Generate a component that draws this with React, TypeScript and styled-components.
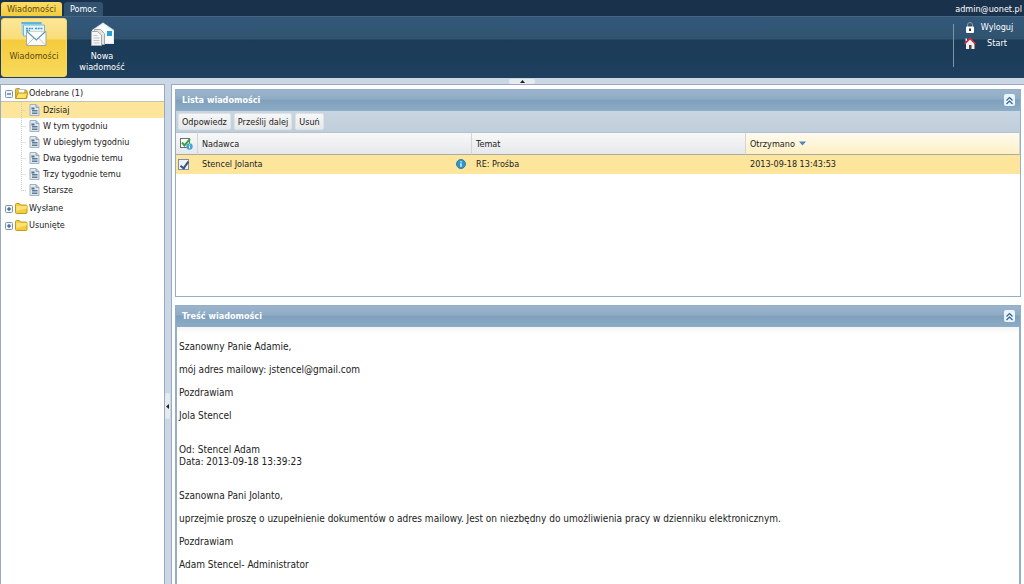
import React, { useState } from "react";
import styled, { createGlobalStyle, css } from "styled-components";

const GlobalStyle = createGlobalStyle`
  * { box-sizing: border-box; }
  body {
    margin: 0;
    background: #cbd7e5;
    color: #222;
    font: 9px/12px "DejaVu Sans Condensed", "DejaVu Sans", sans-serif;
  }
  button, input { font: inherit; color: inherit; margin: 0; padding: 0; }
  ul { list-style: none; margin: 0; padding: 0; }
`;

const Page = styled.div`
  min-height: 100vh;
  display: flex;
  flex-direction: column;
`;

const TopBar = styled.header`
  display: flex;
  justify-content: space-between;
  align-items: flex-end;
  height: 16px;
  padding: 0 2px 0 1px;
  background: #19314b;
  color: #fff;
`;

const Tabs = styled.nav`
  display: flex;
  gap: 2px;
`;

const Tab = styled.button<{ $active?: boolean }>`
  height: 14px;
  padding: 0 6px;
  border: 0;
  border-radius: 3px 3px 0 0;
  color: ${(p) => (p.$active ? "#5b4a10" : "#fff")};
  background: ${(p) =>
    p.$active ? "linear-gradient(#fbdc66, #f3cc3c)" : "#31536f"};
`;

const User = styled.span`
  line-height: 14px;
`;

const Ribbon = styled.div`
  display: flex;
  justify-content: space-between;
  height: 62px;
  padding: 1px 9px 1px 1px;
  border-top: 1px solid #46657f;
  background: linear-gradient(#33587a 0, #30536f 22px, #1b3b57 23px, #1e405e 100%);
  color: #fff;
`;

const Tools = styled.div`
  display: flex;
  gap: 2px;
`;

const Tool = styled.button<{ $active?: boolean }>`
  display: flex;
  flex-direction: column;
  align-items: center;
  gap: 4px;
  width: 66px;
  padding: 2px 0 0;
  border: 1px solid transparent;
  border-radius: 3px;
  background: none;
  line-height: 11px;
  ${(p) =>
    p.$active &&
    css`
      color: #5b4a10;
      border-color: #f6d65a;
      background: linear-gradient(#fce69a 0, #fadc78 20px, #f4cb3c 21px, #f8da5c 100%);
    `}
`;

const Session = styled.div`
  display: flex;
  flex-direction: column;
  gap: 2px;
  height: 43px;
  margin-top: 6px;
  padding-left: 9px;
  border-left: 1px solid #7d95a8;
`;

const SessionLink = styled.a`
  display: grid;
  grid-template-columns: 14px 36px;
  align-items: center;
  gap: 2px;
  height: 14px;
  margin-top: -4px;
  margin-bottom: 4px;
  color: #fff;
  text-align: center;
  text-decoration: none;
`;

const TopSplitter = styled.div`
  display: flex;
  justify-content: center;
  align-items: flex-end;
  height: 6px;
  padding-left: 20px;
`;

const Handle = styled.button<{ $vertical?: boolean }>`
  display: flex;
  align-items: center;
  justify-content: center;
  width: ${(p) => (p.$vertical ? "5px" : "26px")};
  height: ${(p) => (p.$vertical ? "26px" : "5px")};
  border: 0;
  border-radius: 2px;
  background: #e6ebf0;
`;

const Main = styled.main`
  flex: 1;
  display: flex;
`;

const Sidebar = styled.nav`
  flex: none;
  width: 165px;
  border: 1px solid #98abc0;
  border-bottom: 0;
  background: #fff;
`;

const SideSplitter = styled.div`
  display: flex;
  flex: none;
  align-items: center;
  width: 6px;
  padding-top: 132px;
`;

const Content = styled.div`
  flex: 1;
  min-width: 0;
  display: flex;
  flex-direction: column;
  gap: 8px;
  padding: 4px 3px 0;
  border-top: 1px solid #98abc0;
  border-left: 1px solid #98abc0;
  background: #fff;
`;

const Branch = styled.li`
  & + & { margin-top: 1px; }
`;

const Node = styled.div`
  display: flex;
  align-items: center;
  gap: 1px;
  height: 16px;
  padding-left: 4px;
  white-space: nowrap;
`;

const Expander = styled.button`
  display: flex;
  border: 0;
  background: none;
`;

const Leaves = styled.ul`
  padding: 1px 0;
`;

const Leaf = styled.li<{ $selected?: boolean }>`
  display: flex;
  align-items: center;
  gap: 3px;
  height: 16px;
  padding-left: 20px;
  background: ${(p) => (p.$selected ? "#fde69c" : "none")};
  box-shadow: ${(p) => (p.$selected ? "0 -1px 0 #c3c5b4" : "none")};
  white-space: nowrap;
`;

const Panel = styled.section<{ $grow?: boolean }>`
  display: flex;
  flex-direction: column;
  flex: ${(p) => (p.$grow ? "1" : "none")};
  border: 1px solid #94aec6;
  border-bottom-width: ${(p) => (p.$grow ? "0" : "1px")};
`;

const PanelHeader = styled.header`
  display: flex;
  align-items: center;
  justify-content: space-between;
  height: 21px;
  padding: 0 5px 1px 6px;
  color: #fff;
  background: linear-gradient(#9bb4cb 0, #8facc5 9px, #7f9fbc 10px, #8dacc6 100%);
`;

const PanelTitle = styled.h2`
  margin: 0;
  font-size: 9px;
  line-height: 12px;
  font-weight: bold;
`;

const Collapse = styled.button`
  display: flex;
  align-items: center;
  justify-content: center;
  width: 11px;
  height: 12px;
  border: 0;
  border-radius: 2px;
  background: #eaf4fd;
`;

const Toolbar = styled.div`
  display: flex;
  gap: 3px;
  height: 21px;
  padding: 2px;
  background: linear-gradient(#c9d6e1, #bfcedb);
`;

const ToolbarButton = styled.button`
  height: 17px;
  padding: 0 3px;
  border: 1px solid #dfe3e7;
  border-radius: 2px;
  background: linear-gradient(#f7f7f7, #e6e8ea);
`;

const GridBody = styled.div`
  height: 164px;
`;

const Grid = styled.table`
  width: 100%;
  table-layout: fixed;
  border-collapse: separate;
  border-spacing: 0;
`;

const HeadCell = styled.th<{ $narrow?: boolean; $sorted?: boolean }>`
  width: ${(p) => (p.$narrow ? "22px" : "auto")};
  height: 23px;
  padding: 0 4px;
  border-top: 1px solid #b5c1cc;
  border-bottom: 1px solid #a8aaa8;
  border-right: 1px solid #d3d5d8;
  background: ${(p) =>
    p.$sorted
      ? "linear-gradient(#fffaf0, #fdf0c4)"
      : "linear-gradient(#f8f8f8, #e6e8ec)"};
  font-weight: normal;
  text-align: left;
`;

const Cell = styled.td<{ $narrow?: boolean }>`
  height: 19px;
  padding: ${(p) => (p.$narrow ? "0 2px" : "0 6px 1px 4px")};
  background: #fde69c;
`;

const CellRow = styled.div<{ $gap?: boolean }>`
  display: flex;
  align-items: center;
  gap: 4px;
  justify-content: ${(p) => (p.$gap ? "space-between" : "flex-start")};
`;

const Check = styled.input`
  appearance: none;
  display: block;
  position: relative;
  width: 11px;
  height: 11px;
  border: 1px solid #7b91ad;
  background: #eef3f7;
  &:checked::after {
    content: "";
    position: absolute;
    left: 3px;
    top: 0;
    width: 3px;
    height: 7px;
    border: solid #3d4f7c;
    border-width: 0 2px 2px 0;
    transform: rotate(35deg);
  }
`;

const Message = styled.article`
  flex: 1;
  padding: 14px 2px;
  border: solid #94aec6;
  border-width: 0 1px;
  font-size: 10px;
  line-height: 12px;
  background: linear-gradient(#f4f4f4, #fff 6px);
  p { margin: 0 0 11px; }
`;

const Quote = styled.div`
  padding-top: 11px;
`;

const SheetIcon = () => (
  <svg width="11" height="13" viewBox="0 0 11 13">
    <path d="M1 .5h6L10 3.500v8H1z" fill="#dfe8ee" stroke="#a3b3bf" />
    <path d="M7 .5v3h3" fill="#b3c6d4" stroke="#93a7b7" />
    <path d="M2.500 3.500h3v2h-3z" fill="#4e718c" />
    <path d="M3 6.500h5.500M3 8h5.500M3 9.500h5.500" stroke="#4e718c" strokeWidth=".9" />
  </svg>
);

const FolderIcon = ({ open }: { open?: boolean }) => (
  <svg width="13" height="13" viewBox="0 0 13 13">
    <path d="M.5 2.500q0-1 1-1h3l1 1.500h5.500q1 0 1 1v6.500q0 1-1 1H1.500q-1 0-1-1z" fill={open ? "#e4bd2c" : "#f2cf36"} stroke="#c09c25" />
    {open ? (
      <>
        <path d="M3.500 2.500h6v5h-6z" fill="#fff" stroke="#b9bfc6" />
        <path d="M.5 11.500L3 6h9.800l-2 5.500z" fill="#ffe169" stroke="#bd9613" />
      </>
    ) : (
      <path d="M1.200 4h10.500v2.500L1.200 9z" fill="#fae276" />
    )}
  </svg>
);

const ExpanderIcon = ({ open }: { open?: boolean }) => (
  <svg width="9" height="9" viewBox="0 0 9 9">
    <rect x=".5" y="1.500" width="7" height="7" rx="1" fill="#eff4fa" stroke="#7895bd" />
    <path d={open ? "M2 5h4" : "M2 5h4M4 3v4"} stroke="#29456f" />
  </svg>
);

const MailIcon = () => (
  <svg width="26" height="26" viewBox="0 0 26 26">
    <path d="M.5 1h20v13h-20z" fill="#a6d6e8" />
    <path d="M.5 1h20v2h-20z" fill="#62b2d0" />
    <path d="M2.500 4h21v11h-21z" fill="#e4f5fb" stroke="#79b8d1" />
    <path d="M5 7.500h7M5 9.500h4M14 7.500h8" stroke="#3e9bc4" strokeWidth="1.500" strokeDasharray="2 .7" />
    <path d="M5.500 10.500h19.500v14H5.500z" fill="#fbfbfa" stroke="#a7a999" />
    <path d="M6 24l7-7M24.500 24l-7-7" fill="none" stroke="#c3c5bb" />
    <path d="M6 10.500l9.300 8.500 9.200-8.500" fill="#fff" stroke="#5f9ab5" strokeWidth="1.200" />
  </svg>
);

const NewMailIcon = () => (
  <svg width="26" height="26" viewBox="0 -1 26 26">
    <path d="M3 8L14 .5l11 7.500v14H3z" fill="#dfe8ee" />
    <path d="M4 8.500L14 2l10 6.500V21H4z" fill="#fbfcfc" />
    <path d="M18 9h5v5h-5z" fill="#2a9fd6" />
    <path d="M5.500 7.500h6l4 4v11h-10z" fill="#e4e4e2" stroke="#a2a8ac" />
    <path d="M2.500 9.500h6l4 3.500v10.500h-10z" fill="#f6f6f4" stroke="#a2a8ac" />
    <path d="M4.500 13.500h4M4.500 16h6M4.500 18.500h6M4.500 21h6" fill="none" stroke="#c1c5c7" />
  </svg>
);

const LockIcon = () => (
  <svg width="14" height="13" viewBox="0 0 14 13">
    <path d="M4.500 6V4a2.500 2.500 0 0 1 5 0v2" fill="none" stroke="#8d9ba8" />
    <rect x="3" y="5.500" width="8" height="6.500" rx="1" fill="#fff" />
    <path d="M6 7.500h2v2.500H6z" fill="#24364a" />
  </svg>
);

const HomeIcon = () => (
  <svg width="14" height="13" viewBox="0 0 14 13">
    <path d="M3 6l4-4 4.500 4v6H3z" fill="#f1f1f1" />
    <path d="M2.500 1.500H4v3H2.500z" fill="#eee" />
    <path d="M1.500 6.800L7 1.500l5.500 5.300" fill="none" stroke="#d0303e" strokeWidth="1.700" />
    <path d="M6 8h2.500v4H6z" fill="#5a3d3d" />
  </svg>
);

const ChevronsIcon = () => (
  <svg width="9" height="9" viewBox="0 0 9 9">
    <path d="M1.500 4.500l3-3 3 3M1.500 8l3-3 3 3" fill="none" stroke="#33608f" strokeWidth="1.200" />
  </svg>
);

const InfoIcon = () => (
  <svg width="10" height="10" viewBox="0 0 10 10">
    <circle cx="5" cy="5" r="4.500" fill="#3195c8" stroke="#2b7fae" />
    <path d="M5 4.300v3.500M5 2.200v1.300" stroke="#fff" strokeWidth="1.300" />
  </svg>
);

const StatusIcon = () => (
  <svg width="13" height="13" viewBox="0 0 13 13">
    <rect x=".5" y="1.500" width="9" height="9" fill="#fff" stroke="#69707a" />
    <path d="M2 5.500l2.500 3L10 1.800" fill="none" stroke="#35a43a" strokeWidth="2" />
    <circle cx="9.500" cy="9.500" r="3.200" fill="#44a7d0" />
    <path d="M9.500 9v2.200M9.500 7.500v.8" stroke="#fff" />
  </svg>
);

const Arrow = ({ d, fill = "#222", size = 5 }: { d: string; fill?: string; size?: number }) => (
  <svg width={size} height={size} viewBox="0 0 5 5">
    <path d={d} fill={fill} />
  </svg>
);

const periods = ["Dzisiaj", "W tym tygodniu", "W ubiegłym tygodniu", "Dwa tygodnie temu", "Trzy tygodnie temu", "Starsze"];

function PanelHead({ title }: { title: string }) {
  return (
    <PanelHeader>
      <PanelTitle>{title}</PanelTitle>
      <Collapse aria-label="Zwiń"><ChevronsIcon /></Collapse>
    </PanelHeader>
  );
}

export default function App() {
  const [checked, setChecked] = useState(true);
  return (
    <Page>
      <GlobalStyle />
      <TopBar>
        <Tabs>
          <Tab $active>Wiadomości</Tab>
          <Tab>Pomoc</Tab>
        </Tabs>
        <User>admin@uonet.pl</User>
      </TopBar>
      <Ribbon>
        <Tools>
          <Tool $active><MailIcon />Wiadomości</Tool>
          <Tool><NewMailIcon /><span>Nowa<br />wiadomość</span></Tool>
        </Tools>
        <Session>
          <SessionLink href="#logout"><LockIcon />Wyloguj</SessionLink>
          <SessionLink href="#start"><HomeIcon />Start</SessionLink>
        </Session>
      </Ribbon>
      <TopSplitter>
        <Handle aria-label="Zwiń pasek"><Arrow d="M2.500 1L5 4H0z" /></Handle>
      </TopSplitter>
      <Main>
        <Sidebar>
          <ul>
            <Branch>
              <Node>
                <Expander aria-label="Zwiń"><ExpanderIcon open /></Expander>
                <FolderIcon open />
                <span>Odebrane (1)</span>
              </Node>
              <Leaves>
                {periods.map((p, i) => (
                  <Leaf key={p} $selected={i === 0}>
                    <svg width="5" height="16" viewBox="0 0 5 16">
                      <path d={i === 5 ? "M.5 0v8.500H5" : "M.5 0v16M.5 8.500H5"} fill="none" stroke="#c3cbd6" strokeDasharray="1 1" />
                    </svg>
                    <SheetIcon />
                    {p}
                  </Leaf>
                ))}
              </Leaves>
            </Branch>
            {["Wysłane", "Usunięte"].map((name) => (
              <Branch key={name}>
                <Node>
                  <Expander aria-label="Rozwiń"><ExpanderIcon /></Expander>
                  <FolderIcon />
                  <span>{name}</span>
                </Node>
              </Branch>
            ))}
          </ul>
        </Sidebar>
        <SideSplitter>
          <Handle $vertical aria-label="Zwiń drzewo"><Arrow d="M1 2.500L4 0v5z" /></Handle>
        </SideSplitter>
        <Content>
          <Panel>
            <PanelHead title="Lista wiadomości" />
            <Toolbar>
              <ToolbarButton>Odpowiedz</ToolbarButton>
              <ToolbarButton>Prześlij dalej</ToolbarButton>
              <ToolbarButton>Usuń</ToolbarButton>
            </Toolbar>
            <GridBody>
              <Grid>
                <thead>
                  <tr>
                    <HeadCell $narrow aria-label="Status"><CellRow><StatusIcon /></CellRow></HeadCell>
                    <HeadCell>Nadawca</HeadCell>
                    <HeadCell>Temat</HeadCell>
                    <HeadCell $sorted>
                      <CellRow>Otrzymano <Arrow d="M0 1h5L2.500 4z" fill="#4e86b4" size={7} /></CellRow>
                    </HeadCell>
                  </tr>
                </thead>
                <tbody>
                  <tr>
                    <Cell $narrow>
                      <Check type="checkbox" aria-label="Zaznacz wiadomość" checked={checked} onChange={(e) => setChecked(e.target.checked)} />
                    </Cell>
                    <Cell><CellRow $gap>Stencel Jolanta <InfoIcon /></CellRow></Cell>
                    <Cell>RE: Prośba</Cell>
                    <Cell>2013-09-18 13:43:53</Cell>
                  </tr>
                </tbody>
              </Grid>
            </GridBody>
          </Panel>
          <Panel $grow>
            <PanelHead title="Treść wiadomości" />
            <Message>
              <p>Szanowny Panie Adamie,</p>
              <p>mój adres mailowy: jstencel@gmail.com</p>
              <p>Pozdrawiam</p>
              <p>Jola Stencel</p>
              <Quote>
                <p>Od: Stencel Adam<br />Data: 2013-09-18 13:39:23</p>
              </Quote>
              <Quote>
                <p>Szanowna Pani Jolanto,</p>
                <p>uprzejmie proszę o uzupełnienie dokumentów o adres mailowy. Jest on niezbędny do umożliwienia pracy w dzienniku elektronicznym.</p>
                <p>Pozdrawiam</p>
                <p>Adam Stencel- Administrator</p>
              </Quote>
            </Message>
          </Panel>
        </Content>
      </Main>
    </Page>
  );
}
